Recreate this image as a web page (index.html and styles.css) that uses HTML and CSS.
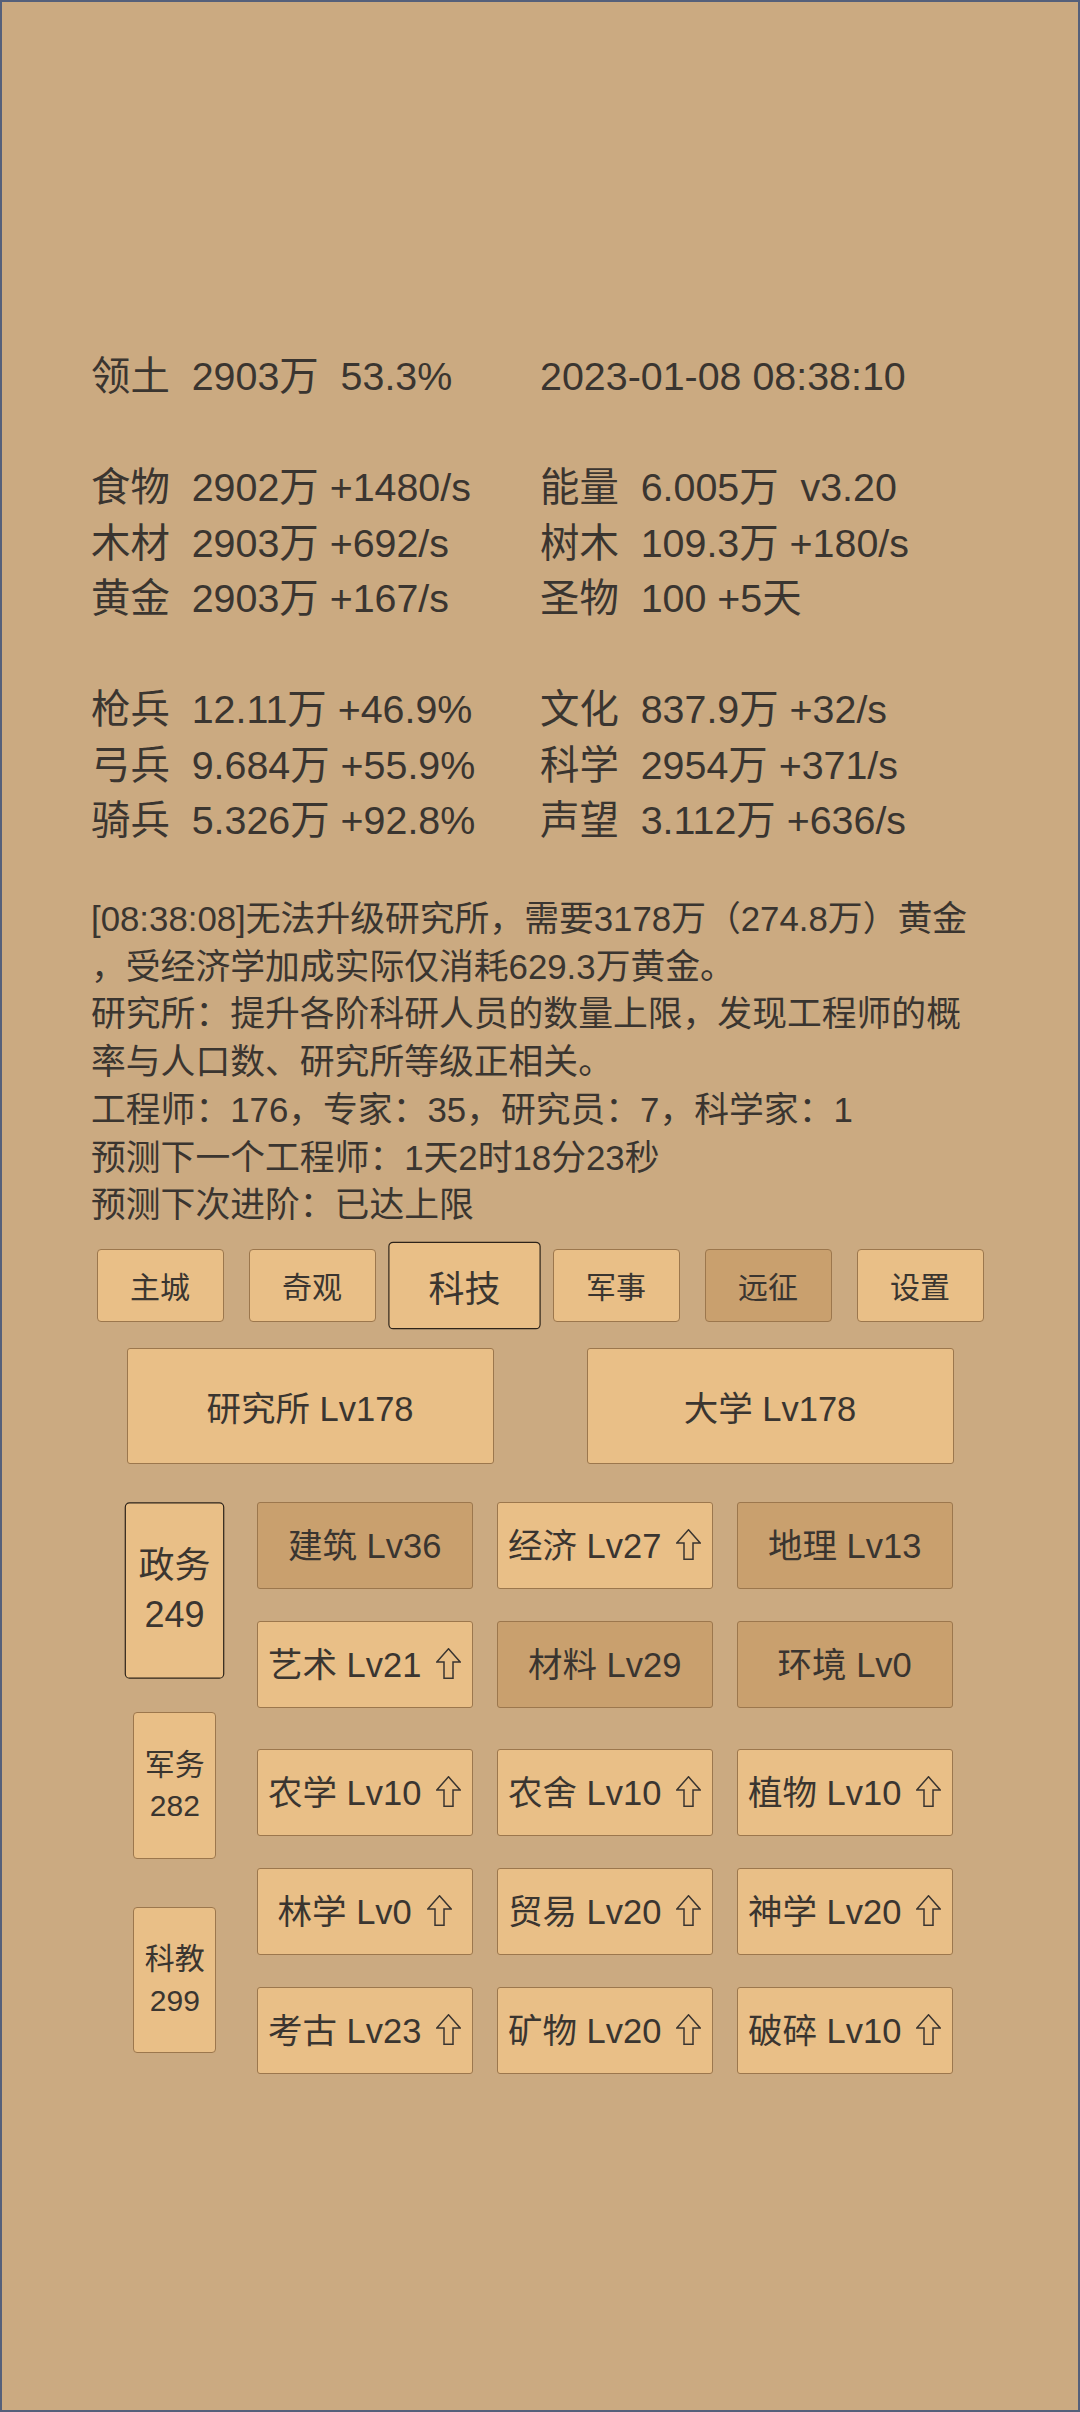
FILE: index.html
```html
<!DOCTYPE html>
<html lang="zh">
<head>
<meta charset="utf-8">
<title>科技</title>
<link rel="stylesheet" href="styles.css">
</head>
<body>
<div class="screen">
  <div class="stats">
    <div>领土  2903万  53.3%</div><div>2023-01-08 08:38:10</div>
    <div class="blank"></div>
    <div>食物  2902万 +1480/s</div><div>能量  6.005万  v3.20</div>
    <div>木材  2903万 +692/s</div><div>树木  109.3万 +180/s</div>
    <div>黄金  2903万 +167/s</div><div>圣物  100 +5天</div>
    <div class="blank"></div>
    <div>枪兵  12.11万 +46.9%</div><div>文化  837.9万 +32/s</div>
    <div>弓兵  9.684万 +55.9%</div><div>科学  2954万 +371/s</div>
    <div>骑兵  5.326万 +92.8%</div><div>声望  3.112万 +636/s</div>
  </div>

  <div class="log">
    <p>[08:38:08]无法升级研究所，需要3178万（274.8万）黄金<br>，受经济学加成实际仅消耗629.3万黄金。</p>
    <p>研究所：提升各阶科研人员的数量上限，发现工程师的概<br>率与人口数、研究所等级正相关。</p>
    <p>工程师：176，专家：35，研究员：7，科学家：1</p>
    <p>预测下一个工程师：1天2时18分23秒</p>
    <p>预测下次进阶：已达上限</p>
  </div>

  <div class="tabs">
    <div class="tab">主城</div>
    <div class="tab">奇观</div>
    <div class="tab active">科技</div>
    <div class="tab">军事</div>
    <div class="tab dim">远征</div>
    <div class="tab">设置</div>
  </div>

  <div class="halls">
    <div class="hall">研究所 Lv178</div>
    <div class="hall">大学 Lv178</div>
  </div>

  <div class="tech">
    <div class="side">
      <div class="cat active">政务<br>249</div>
      <div class="cat">军务<br>282</div>
      <div class="cat">科教<br>299</div>
    </div>
    <div class="groups">
      <div class="group">
        <div class="tb dim"><span class="lbl">建筑 Lv36</span></div>
        <div class="tb"><span class="lbl">经济 Lv27<svg class="up" viewBox="0 0 25 31"><polygon points="12.5,0.8 24.2,14 17,14 17,30.2 8,30.2 8,14 0.8,14"/></svg></span></div>
        <div class="tb dim"><span class="lbl">地理 Lv13</span></div>
        <div class="tb"><span class="lbl">艺术 Lv21<svg class="up" viewBox="0 0 25 31"><polygon points="12.5,0.8 24.2,14 17,14 17,30.2 8,30.2 8,14 0.8,14"/></svg></span></div>
        <div class="tb dim"><span class="lbl">材料 Lv29</span></div>
        <div class="tb dim"><span class="lbl">环境 Lv0</span></div>
      </div>
      <div class="group">
        <div class="tb"><span class="lbl">农学 Lv10<svg class="up" viewBox="0 0 25 31"><polygon points="12.5,0.8 24.2,14 17,14 17,30.2 8,30.2 8,14 0.8,14"/></svg></span></div>
        <div class="tb"><span class="lbl">农舍 Lv10<svg class="up" viewBox="0 0 25 31"><polygon points="12.5,0.8 24.2,14 17,14 17,30.2 8,30.2 8,14 0.8,14"/></svg></span></div>
        <div class="tb"><span class="lbl">植物 Lv10<svg class="up" viewBox="0 0 25 31"><polygon points="12.5,0.8 24.2,14 17,14 17,30.2 8,30.2 8,14 0.8,14"/></svg></span></div>
        <div class="tb"><span class="lbl">林学 Lv0<svg class="up" viewBox="0 0 25 31"><polygon points="12.5,0.8 24.2,14 17,14 17,30.2 8,30.2 8,14 0.8,14"/></svg></span></div>
        <div class="tb"><span class="lbl">贸易 Lv20<svg class="up" viewBox="0 0 25 31"><polygon points="12.5,0.8 24.2,14 17,14 17,30.2 8,30.2 8,14 0.8,14"/></svg></span></div>
        <div class="tb"><span class="lbl">神学 Lv20<svg class="up" viewBox="0 0 25 31"><polygon points="12.5,0.8 24.2,14 17,14 17,30.2 8,30.2 8,14 0.8,14"/></svg></span></div>
        <div class="tb"><span class="lbl">考古 Lv23<svg class="up" viewBox="0 0 25 31"><polygon points="12.5,0.8 24.2,14 17,14 17,30.2 8,30.2 8,14 0.8,14"/></svg></span></div>
        <div class="tb"><span class="lbl">矿物 Lv20<svg class="up" viewBox="0 0 25 31"><polygon points="12.5,0.8 24.2,14 17,14 17,30.2 8,30.2 8,14 0.8,14"/></svg></span></div>
        <div class="tb"><span class="lbl">破碎 Lv10<svg class="up" viewBox="0 0 25 31"><polygon points="12.5,0.8 24.2,14 17,14 17,30.2 8,30.2 8,14 0.8,14"/></svg></span></div>
      </div>
    </div>
  </div>
</div>
</body>
</html>
```

FILE: styles.css
```css
html, body {
  margin: 0;
  padding: 0;
  background: #cbaa81;
}

.screen {
  width: 1080px;
  height: 2412px;
  box-sizing: border-box;
  border: 2px solid #55607a;
  background: #cbaa81;
  color: #3a3530;
  font-family: "Liberation Sans", "Noto Sans CJK SC", sans-serif;
  padding-top: 347px;
  overflow: hidden;
}

.stats {
  display: grid;
  grid-template-columns: 449px auto;
  margin-left: 89px;
  font-size: 39.4px;
  line-height: 55.5px;
  white-space: pre;
}

.stats .blank {
  grid-column: 1 / span 2;
  height: 55.5px;
}

.log {
  margin: 46.5px 0 0 89px;
  font-size: 34.8px;
  line-height: 47.7px;
  white-space: nowrap;
}

.log p {
  margin: 0;
}

.tabs {
  display: flex;
  justify-content: center;
  align-items: center;
  gap: 25px;
  margin-top: 20px;
  height: 73px;
}

.tab {
  width: 127px;
  height: 73px;
  box-sizing: border-box;
  border: 1px solid #9c774d;
  border-radius: 4px;
  background: #e9bf87;
  font-size: 30px;
  display: flex;
  align-items: center;
  justify-content: center;
}

.tab.dim {
  background: #c9a06e;
}

.tab.active,
.cat.active {
  transform: scale(1.2);
  border-color: #2e241a;
}

.halls {
  display: flex;
  justify-content: center;
  gap: 93px;
  margin-top: 25.7px;
}

.hall {
  width: 367px;
  height: 116.3px;
  box-sizing: border-box;
  border: 1px solid #9c774d;
  border-radius: 3px;
  background: #e9bf87;
  font-size: 34.5px;
  display: flex;
  align-items: center;
  justify-content: center;
}

.tech {
  display: flex;
  align-items: flex-start;
  gap: 40.4px;
  margin: 38.5px 0 0 131.3px;
}

.side {
  display: flex;
  flex-direction: column;
  gap: 48px;
  padding-top: 15px;
  width: 83px;
}

.cat {
  width: 83px;
  height: 146.7px;
  box-sizing: border-box;
  border: 1px solid #9c774d;
  border-radius: 4px;
  background: #e9bf87;
  font-size: 30px;
  line-height: 41.7px;
  text-align: center;
  display: flex;
  align-items: center;
  justify-content: center;
}

.groups {
  display: flex;
  flex-direction: column;
  gap: 41.4px;
}

.group {
  display: grid;
  grid-template-columns: repeat(3, 216px);
  column-gap: 24px;
  row-gap: 32.4px;
}

.tb {
  height: 86.6px;
  box-sizing: border-box;
  border: 1px solid #9c774d;
  border-radius: 3px;
  background: #e9bf87;
  font-size: 34.5px;
  white-space: nowrap;
  display: flex;
  align-items: center;
  justify-content: center;
}

.tb.dim {
  background: #c9a06e;
}

.lbl {
  line-height: 48px;
}

.up {
  width: 25px;
  height: 31px;
  margin-left: 15px;
  vertical-align: -2px;
}

.up polygon {
  fill: none;
  stroke: #3a3530;
  stroke-width: 1.5;
  stroke-linejoin: miter;
}
```
